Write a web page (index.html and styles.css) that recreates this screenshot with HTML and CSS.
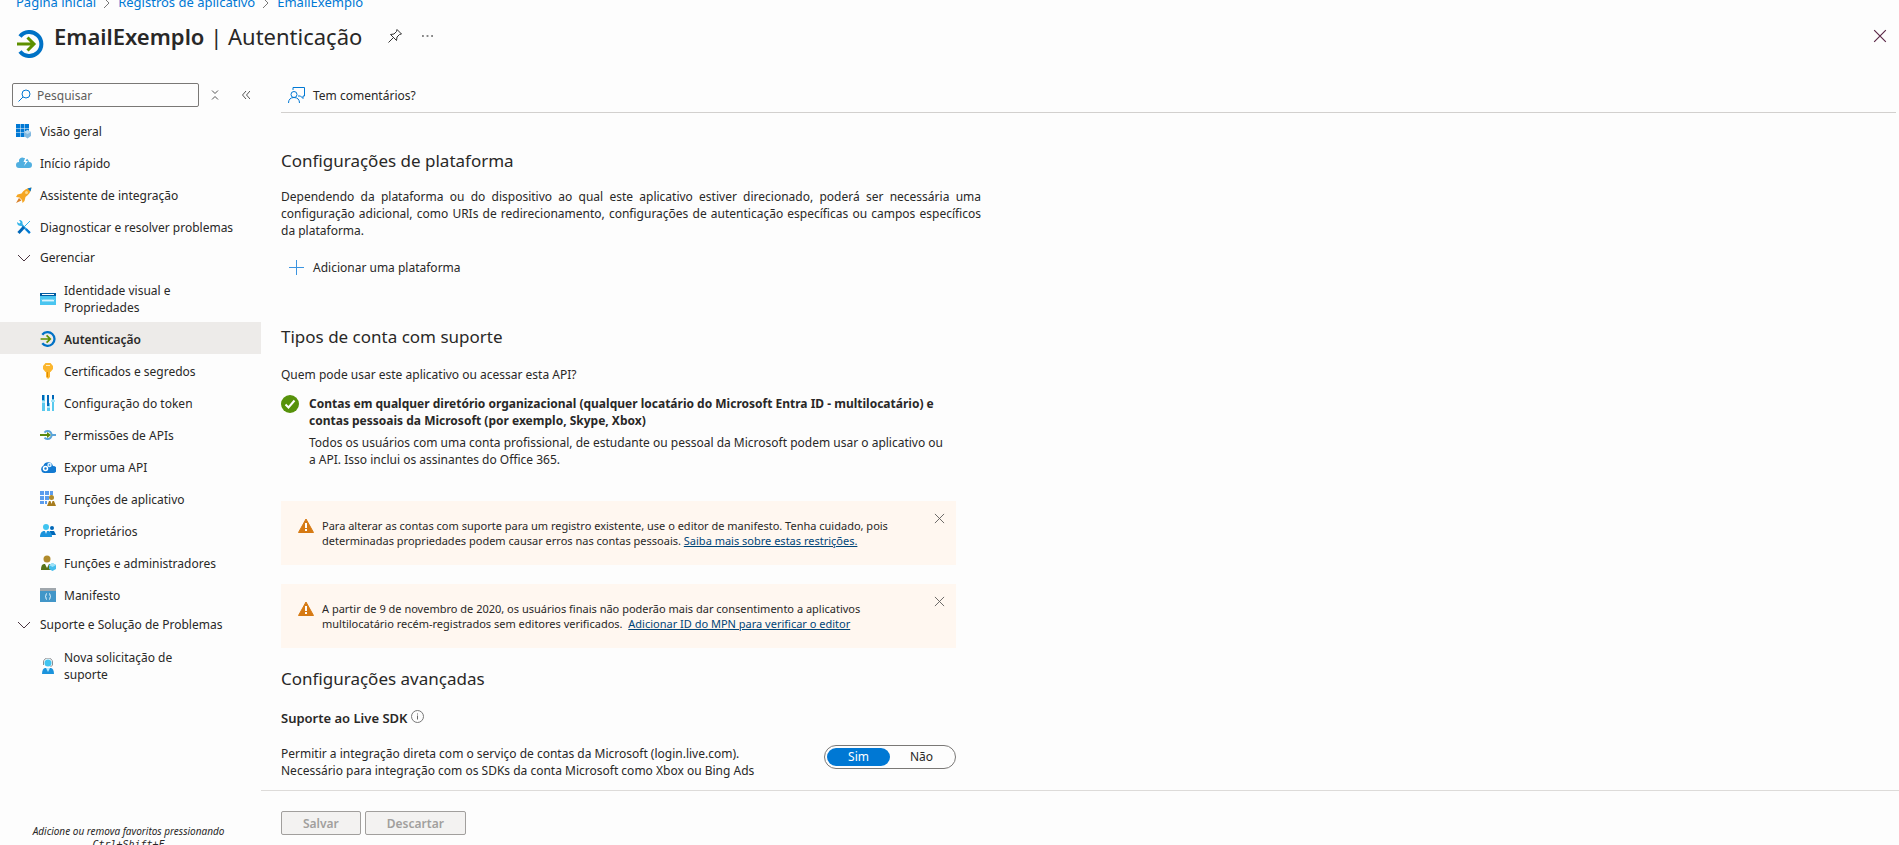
FILE: index.html
```html
<!DOCTYPE html>
<html lang="pt-BR">
<head>
<meta charset="utf-8">
<title>EmailExemplo | Autenticação</title>
<link rel="stylesheet" href="styles.css">
</head>
<body>
<svg class="defs" aria-hidden="true">
  <symbol id="auth" viewBox="0 0 28 28">
    <path d="M4 6.500A12 12 0 1 1 4 21.500" fill="none" stroke="#0072c6" stroke-width="4"/>
    <path d="M1 14h16M11.500 7.500L18 14l-6.500 6.500" fill="none" stroke="#5e9000" stroke-width="3"/>
  </symbol>
  <symbol id="chevron" viewBox="0 0 14 14"><path d="M1 4l6 6 6-6" fill="none" stroke="#4a3540"/></symbol>
  <symbol id="close" viewBox="0 0 12 12"><path d="M1 1l10 10M11 1L1 11" fill="none" stroke="currentColor"/></symbol>
  <symbol id="warning" viewBox="0 0 16 16">
    <path d="M8 1L15.500 14.500H.5z" fill="#d67a14" stroke="#d67a14" stroke-linejoin="round"/>
    <path d="M7 5h2v5H7zM7 11h2v2H7z" fill="#fff"/>
  </symbol>
</svg>

<header class="header">
  <nav class="breadcrumb" aria-label="Trilha">
    <a href="#">Página inicial</a>
    <svg viewBox="0 0 8 12"><path d="M1 1l5 5-5 5"/></svg>
    <a href="#">Registros de aplicativo</a>
    <svg viewBox="0 0 8 12"><path d="M1 1l5 5-5 5"/></svg>
    <a href="#">EmailExemplo</a>
  </nav>
  <div class="title-row">
    <svg class="title-icon"><use href="#auth"/></svg>
    <h1><strong>EmailExemplo</strong> | Autenticação</h1>
    <button class="icon-button pin" aria-label="Fixar">
      <svg viewBox="0 0 14 14"><path d="M9 .5L13.500 5l-2 .5L9 8l-.5 3.500L2.500 5.500 6 5l2.500-2.500zM5.500 8.500l-5 5" fill="none" stroke="#333"/></svg>
    </button>
    <button class="icon-button more" aria-label="Mais">
      <svg viewBox="0 0 12 4"><path d="M0 1h2v2H0zM5 1h2v2H5zM10 1h2v2h-2z" fill="#888"/></svg>
    </button>
    <button class="icon-button close-page" aria-label="Fechar"><svg><use href="#close"/></svg></button>
  </div>
</header>

<div class="layout">
  <aside class="sidebar">
    <div class="search-row">
      <label class="search">
        <svg viewBox="0 0 13 13"><circle cx="8" cy="5" r="4" fill="none" stroke="#0078d4"/><path d="M5 8L.5 12.500" stroke="#0078d4"/></svg>
        <input type="text" placeholder="Pesquisar" aria-label="Pesquisar">
      </label>
      <button class="icon-button" aria-label="Recolher grupos"><svg viewBox="0 0 8 10"><path d="M1 .5l3 3 3-3M1 9.500l3-3 3 3" fill="none" stroke="#555"/></svg></button>
      <button class="icon-button" aria-label="Recolher menu"><svg viewBox="0 0 8 10"><path d="M4 1L.5 5 4 9M8 1L4.500 5 8 9" fill="none" stroke="#555"/></svg></button>
    </div>

    <nav class="menu" aria-label="Menu do recurso">
      <a class="item" href="#">
        <svg viewBox="0 0 16 16"><path d="M0 1h4v4H0zM4.500 1h4v4h-4zM9 1h4v4H9zM0 5.500h4v4H0zM4.500 5.500h4v4h-4zM0 10h4v4H0zM4.500 10h4v4h-4zM9 5.500h4v3H9z" fill="#0078d4"/><path d="M11.500 7L15 9v4l-3.500 2.500L8 13V9z" fill="#83b9e0"/><path d="M11.500 7L15 9l-3.500 2L8 9z" fill="#b9dbf2"/></svg>
        <span>Visão geral</span></a>
      <a class="item" href="#">
        <svg viewBox="0 0 16 16"><path d="M3 13a3 3 0 0 1 0-6 3.500 3.500 0 0 1 5-4 5 5 0 0 1 5 4 3 3 0 0 1 0 6z" fill="#50afe0"/><path d="M9.500 2L7.500 7h2L8 11l4-5H9.500L12 2z" fill="#fff"/></svg>
        <span>Início rápido</span></a>
      <a class="item" href="#">
        <svg viewBox="0 0 16 16"><path d="M15.500.5c-5 .5-8 3-10 6l-4 1L0 10l3.500.5L6 13l.5 3 2-2 1-4c3-2 5.500-5 6-9.500z" fill="#f5a623"/><path d="M3 11l2.500 2.500L0 16z" fill="#d9822b"/><path d="M11.500 1.500L15.500.5l-1 4z" fill="#0078d4"/><circle cx="10.500" cy="5.500" r="1.500" fill="#fcd98a"/></svg>
        <span>Assistente de integração</span></a>
      <a class="item" href="#">
        <svg viewBox="0 0 16 16"><path d="M4 4l9.500 10" stroke="#32a5e3" stroke-width="2"/><path d="M1 3l3 2 1-1-2-3c3 0 4 2 3.500 4L5 7C3 7 1 6 1 3z" fill="#32b5e9"/><path d="M14 2L8 8" stroke="#32b5e9"/><path d="M8 8l-5.500 6" stroke="#0067b8" stroke-width="3"/><path d="M10 10l4 4" stroke="#0078d4" stroke-width="2"/></svg>
        <span>Diagnosticar e resolver problemas</span></a>

      <button class="group" aria-expanded="true"><svg><use href="#chevron"/></svg><span>Gerenciar</span></button>
      <a class="item sub wrap" href="#">
        <svg viewBox="0 0 16 16"><path d="M0 2h16v4H0z" fill="#005ba1"/><path d="M2 3h12v1H2z" fill="#fff"/><path d="M0 5h16v9H0z" fill="#4ac5f0"/><path d="M2 8.500l1 2 1-2 1 2 1-2 1 2 1-2 1 2 1-2 1 2 1-2 1 2 1-2" fill="none" stroke="#d8f4ff"/></svg>
        <span>Identidade visual e Propriedades</span></a>
      <a class="item sub selected" href="#" aria-current="page"><svg><use href="#auth"/></svg><span>Autenticação</span></a>
      <a class="item sub" href="#">
        <svg viewBox="0 0 16 16"><path d="M5.500 0h5L13 3v3l-2.500 3H10v5l-2 2-2-2V9h-.5L3 6V3z" fill="#fbb62e"/><path d="M6 2h4v1H6z" fill="#fff0c7"/><path d="M7 9h1v5H7z" fill="#e08c00"/></svg>
        <span>Certificados e segredos</span></a>
      <a class="item sub" href="#">
        <svg viewBox="0 0 16 16"><path d="M2 0h3v16H2zM7 8h3v8H7zM12 0h2v16h-2z" fill="#58c9ee"/><path d="M2 0h2v5H2zM7 0h2v11H7zM12 0h2v4h-2z" fill="#0067b8"/><path d="M2 6h3v2H2zM7 11h3v2H7zM11 5h4v2h-4z" fill="#a5e4f8"/></svg>
        <span>Configuração do token</span></a>
      <a class="item sub" href="#">
        <svg viewBox="0 0 16 16"><path d="M4.500 5.500a4 4 0 1 1 0 5M12 8h4" fill="none" stroke="#5ba4d9" stroke-width="2"/><path d="M0 7h7V5l4 3-4 3V9H0z" fill="#5e8a10"/></svg>
        <span>Permissões de APIs</span></a>
      <a class="item sub" href="#">
        <svg viewBox="0 0 16 16"><path d="M4 14a4 4 0 0 1-.5-7.500A5 5 0 0 1 13 7a3.500 3.500 0 0 1 0 7z" fill="#137ad1"/><circle cx="5.500" cy="9.500" r="2" fill="none" stroke="#fff" stroke-width="1.500"/><circle cx="9.500" cy="6" r="1.500" fill="none" stroke="#d8efff" stroke-width="1.500"/></svg>
        <span>Expor uma API</span></a>
      <a class="item sub" href="#">
        <svg viewBox="0 0 16 16"><path d="M0 0h4v4H0zM5 0h4v4H5zM10 0h3v4h-3zM0 5h4v4H0zM5 5h4v4H5zM0 10h4v3H0zM5 10h2v3H5z" fill="#5c9ded"/><circle cx="11.500" cy="6.500" r="2.500" fill="#b08b2c"/><path d="M7 15l2-5h5l2 5z" fill="#a67c1e"/><path d="M10.500 10h2l-1 3z" fill="#fff"/></svg>
        <span>Funções de aplicativo</span></a>
      <a class="item sub" href="#">
        <svg viewBox="0 0 16 16"><circle cx="12" cy="5" r="2" fill="#0067b8"/><path d="M9 12l1-4h4l2 4z" fill="#0067b8"/><circle cx="6" cy="4" r="3" fill="#40c4f0"/><path d="M0 14c0-4 2-6 4-6h4c2 0 4 2 4 6z" fill="#1b93dc"/><path d="M5 8h2l-1 3z" fill="#fff"/></svg>
        <span>Proprietários</span></a>
      <a class="item sub" href="#">
        <svg viewBox="0 0 16 16"><circle cx="7" cy="4" r="3.500" fill="#b08b2c"/><path d="M1 15c0-4 1-6 3-6h6c2 0 3 2 3 6z" fill="#567318"/><path d="M5 9h4l-2 4z" fill="#fff"/><path d="M12.500 8L16 10v4l-3.500 2L9 14v-4z" fill="#45bdec"/><path d="M12.500 8L16 10l-3.500 2L9 10z" fill="#9fe2f8"/></svg>
        <span>Funções e administradores</span></a>
      <a class="item sub" href="#">
        <svg viewBox="0 0 16 16"><path d="M0 1h16v4H0z" fill="#a0a7ad"/><path d="M0 4h16v11H0z" fill="#4296c8"/><path d="M7 6.500c-2 0 0 3-2 3 2 0 0 3 2 3M9 6.500c2 0 0 3 2 3-2 0 0 3-2 3" fill="none" stroke="#d8edf8"/></svg>
        <span>Manifesto</span></a>

      <button class="group" aria-expanded="true"><svg><use href="#chevron"/></svg><span>Suporte e Solução de Problemas</span></button>
      <a class="item sub wrap" href="#">
        <svg viewBox="0 0 16 16"><path d="M3.500 7V4a4.500 4 0 0 1 9 0v3l-2 2" fill="none" stroke="#8a8f94"/><circle cx="8" cy="5" r="3.500" fill="#40c4f0"/><path d="M2 16c0-4 1.500-6 3-6h6c1.500 0 3 2 3 6z" fill="#1b93dc"/><path d="M6 10h4l-2 4z" fill="#b9ebff"/></svg>
        <span>Nova solicitação de suporte</span></a>
    </nav>
    <p class="hint">Adicione ou remova favoritos pressionando <kbd>Ctrl+Shift+F</kbd></p>
  </aside>

  <main class="main">
    <div class="toolbar">
      <button class="command">
        <svg viewBox="0 0 17 17" fill="none" stroke="#0078d4"><circle cx="6" cy="7.500" r="3"/><path d="M.5 16c0-3.500 2-5.500 5.500-5.500s5.500 2 5.500 5.500M5 3V.5h11.500V9H15v2.500L12.500 9H10"/></svg>
        <span>Tem comentários?</span>
      </button>
    </div>

    <div class="content">
      <section class="platform">
        <h2>Configurações de plataforma</h2>
        <p class="intro">Dependendo da plataforma ou do dispositivo ao qual este aplicativo estiver direcionado, poderá ser necessária uma configuração adicional, como URIs de redirecionamento, configurações de autenticação específicas ou campos específicos da plataforma.</p>
        <button class="command">
          <svg viewBox="0 0 17 17"><path d="M8.500 1v15M1 8.500h15" stroke="#3b94e0"/></svg>
          <span>Adicionar uma plataforma</span>
        </button>
      </section>

      <section class="accounts">
        <h2>Tipos de conta com suporte</h2>
        <p>Quem pode usar este aplicativo ou acessar esta API?</p>
        <div class="account">
          <svg viewBox="0 0 18 18"><circle cx="9" cy="9" r="9" fill="#57920b"/><path d="M4.500 9.500l3 3 6-7" fill="none" stroke="#fff" stroke-width="2"/></svg>
          <div>
            <h3>Contas em qualquer diretório organizacional (qualquer locatário do Microsoft Entra ID - multilocatário) e<br>contas pessoais da Microsoft (por exemplo, Skype, Xbox)</h3>
            <p>Todos os usuários com uma conta profissional, de estudante ou pessoal da Microsoft podem usar o aplicativo ou<br>a API. Isso inclui os assinantes do Office 365.</p>
          </div>
        </div>
        <div class="alert" role="status">
          <svg class="alert-icon"><use href="#warning"/></svg>
          <p>Para alterar as contas com suporte para um registro existente, use o editor de manifesto. Tenha cuidado, pois<br>determinadas propriedades podem causar erros nas contas pessoais. <a href="#">Saiba mais sobre estas restrições.</a></p>
          <button class="icon-button" aria-label="Dispensar"><svg><use href="#close"/></svg></button>
        </div>
        <div class="alert" role="status">
          <svg class="alert-icon"><use href="#warning"/></svg>
          <p>A partir de 9 de novembro de 2020, os usuários finais não poderão mais dar consentimento a aplicativos<br>multilocatário recém-registrados sem editores verificados.&nbsp; <a href="#">Adicionar ID do MPN para verificar o editor</a></p>
          <button class="icon-button" aria-label="Dispensar"><svg><use href="#close"/></svg></button>
        </div>
      </section>

      <section class="advanced">
        <h2>Configurações avançadas</h2>
        <h3>Suporte ao Live SDK
          <svg viewBox="0 0 13 13"><circle cx="6.500" cy="6.500" r="6" fill="none" stroke="#777"/><path d="M6 5.500h1v4H6zM6 3.500h1v1H6z" fill="#666"/></svg>
        </h3>
        <div class="setting">
          <p>Permitir a integração direta com o serviço de contas da Microsoft (login.live.com).<br>Necessário para integração com os SDKs da conta Microsoft como Xbox ou Bing Ads</p>
          <div class="toggle" role="radiogroup" aria-label="Suporte ao Live SDK">
            <label><input type="radio" name="live-sdk" checked><span>Sim</span></label>
            <label><input type="radio" name="live-sdk"><span>Não</span></label>
          </div>
        </div>
      </section>
    </div>

    <footer class="footer">
      <button disabled>Salvar</button>
      <button disabled>Descartar</button>
    </footer>
  </main>
</div>
</body>
</html>
```
FILE: styles.css
```css
* { box-sizing: border-box; }

body {
  margin: 0;
  height: 100vh;
  overflow: hidden;
  display: flex;
  flex-direction: column;
  background: #fdfdfd;
  color: #292827;
  font: 12px/17px "Segoe UI", "Noto Sans", "Open Sans", sans-serif;
}

h1, h2, h3, p { margin: 0; }
h2 { font-size: 17px; line-height: 24px; font-weight: 400; }
h3 { font-size: 12px; line-height: 17px; font-weight: 700; }
a { color: inherit; text-decoration: none; }
svg { flex: none; display: block; }
.defs { position: absolute; width: 0; height: 0; }

button {
  font: inherit;
  color: inherit;
  background: none;
  border: 0;
  padding: 0;
}

.icon-button {
  display: flex;
  align-items: center;
  justify-content: center;
  flex: none;
}

/* Header */
.header { flex: none; height: 83px; padding: 0 12px 0 16px; }
.breadcrumb {
  display: flex;
  align-items: center;
  gap: 7px;
  margin-top: -6px;
  color: #0078d4;
  font-size: 13px;
}
.breadcrumb svg { width: 8px; height: 12px; fill: none; stroke: #777; }
.title-row { display: flex; align-items: center; height: 49px; }
.title-icon { width: 28px; height: 28px; margin-top: 17px; }
h1 { margin-left: 10px; font-size: 22px; line-height: 32px; font-weight: 400; }
h1 strong { font-weight: 600; }
.pin { margin-left: 26px; }
.pin svg { width: 14px; height: 14px; }
.more { margin-left: 20px; }
.more svg { width: 11px; height: 4px; }
.close-page { margin-left: auto; color: #5b2747; }
.close-page svg { width: 14px; height: 14px; }

.layout { flex: 1; min-height: 0; display: flex; }

/* Sidebar */
.sidebar {
  flex: none;
  width: 261px;
  display: flex;
  flex-direction: column;
  overflow: hidden;
}
.search-row { flex: none; display: flex; padding-left: 12px; margin-bottom: 8px; }
.search {
  display: flex;
  align-items: center;
  gap: 6px;
  width: 187px;
  height: 24px;
  padding: 0 5px;
  border: 1px solid #7a7876;
  border-radius: 2px;
}
.search svg { width: 13px; height: 13px; }
.search input {
  flex: 1;
  min-width: 0;
  border: 0;
  padding: 0;
  background: none;
  font: inherit;
  outline: 0;
}
.search input::placeholder { color: #605e5c; opacity: 1; }
.search-row .icon-button { flex: 1; }
.search-row .icon-button svg { width: 8px; height: 10px; }

.menu { display: flex; flex-direction: column; }
.item, .group {
  display: flex;
  align-items: center;
  gap: 8px;
  text-align: left;
}
.item { min-height: 32px; padding: 7px 16px; }
.item svg { width: 16px; height: 16px; }
.sub { padding: 8px 16px 6px 40px; }
.wrap { padding-right: 64px; }
.selected { background: #edebe9; font-weight: 600; }
.group { height: 31px; padding: 0 16px 2px 17px; }
.group svg { width: 14px; height: 14px; margin-right: 1px; }
.hint {
  flex: none;
  margin-top: auto;
  margin-bottom: -7px;
  padding: 0 28px 0 24px;
  text-align: center;
  font-size: 10px;
  line-height: 14px;
  font-style: italic;
}
.hint kbd { display: block; font: italic 10px/14px "DejaVu Sans Mono", monospace; }

/* Main pane */
.main { flex: 1; min-width: 0; display: flex; flex-direction: column; }
.toolbar {
  flex: none;
  height: 30px;
  margin: 0 3px 0 20px;
  border-bottom: 1px solid #d2d0ce;
}
.command { display: flex; align-items: center; gap: 8px; height: 24px; padding: 0 7px; }
.command svg { width: 17px; height: 17px; }

.content { flex: 1; min-height: 0; overflow: hidden; padding: 36px 20px 0; }
.content > section { max-width: 675px; }
.content > .platform { max-width: 700px; }
.intro { margin: 15px 0 16px; text-align: justify; }
.accounts { margin-top: 46px; }
.accounts > h2 { margin-bottom: 17px; }
.account { display: flex; gap: 10px; margin: 12px 0 33px; }
.account svg { width: 18px; height: 18px; }
.account h3 { white-space: nowrap; }
.account p { margin-top: 5px; white-space: nowrap; }

.alert {
  display: flex;
  align-items: flex-start;
  padding: 17px 11px 17px 17px;
  margin-bottom: 19px;
  background: #fff7f0;
  font-size: 11px;
  line-height: 15px;
}
.alert-icon { width: 16px; height: 16px; margin-right: 8px; }
.alert p { flex: 1; white-space: nowrap; }
.alert a { color: #004578; text-decoration: underline; }
.alert .icon-button { margin-top: -5px; color: #605e5c; }
.alert .icon-button svg { width: 11px; height: 11px; }

.advanced h3 { display: flex; gap: 4px; margin: 19px 0 18px; font-size: 13px; font-weight: 600; }
.advanced h3 svg { width: 13px; height: 13px; }
.setting { display: flex; justify-content: space-between; }
.toggle {
  display: flex;
  width: 132px;
  height: 24px;
  padding: 2px;
  border: 1px solid #7a7876;
  border-radius: 12px;
}
.toggle label { flex: 1; display: flex; }
.toggle input { appearance: none; width: 0; height: 0; margin: 0; }
.toggle span { flex: 1; border-radius: 9px; text-align: center; line-height: 18px; }
.toggle input:checked + span { background: #0078d4; color: #fff; }

.footer {
  flex: none;
  display: flex;
  gap: 4px;
  height: 55px;
  padding: 20px;
  border-top: 1px solid #dddbd9;
}
.footer button {
  height: 24px;
  padding: 0 21px;
  border: 1px solid #a19f9d;
  border-radius: 2px;
  background: #f3f2f1;
  color: #a19f9d;
  font-weight: 600;
}
```
